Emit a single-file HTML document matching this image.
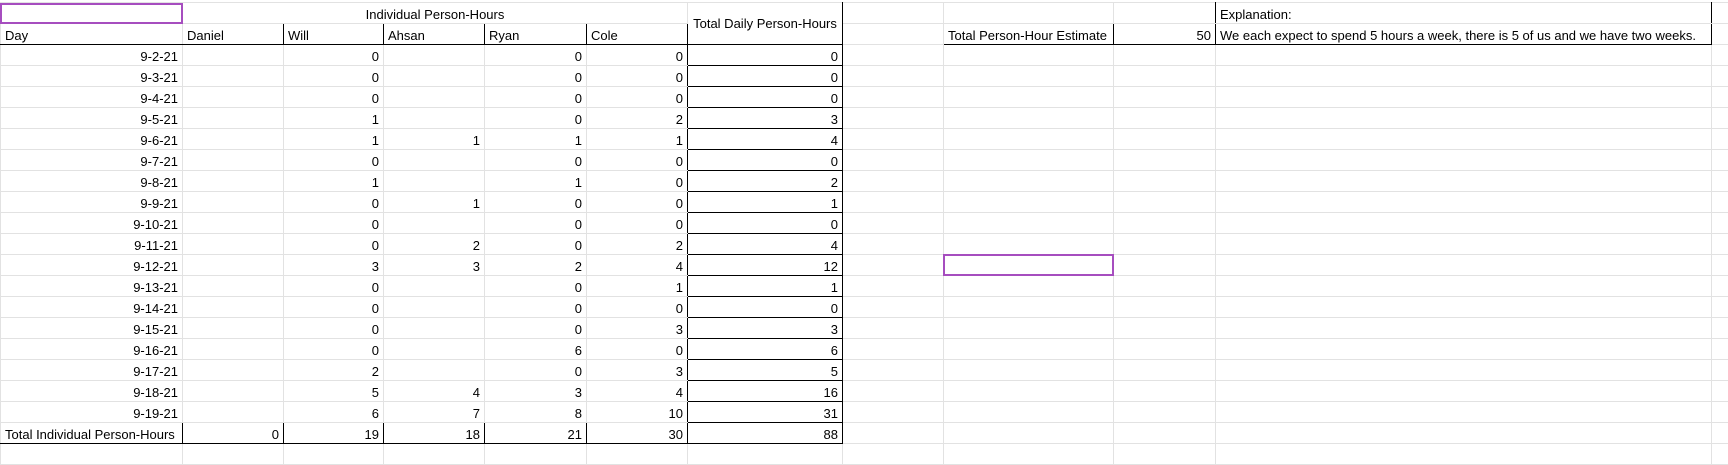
<!DOCTYPE html>
<html><head><meta charset="utf-8">
<style>
html,body{margin:0;padding:0;background:#fff;width:1728px;height:449px;overflow:hidden}
body{font-family:"Liberation Sans",Arial,sans-serif;font-size:13px;color:#000}
.top{position:absolute;left:0;top:0;width:1728px;height:2px;border-bottom:1px solid #c8c8c8}
table{position:absolute;left:0;top:2px;border-collapse:collapse;table-layout:fixed;width:1728px}
td{height:20px;padding:0 4px 0 4px;border:1px solid #e2e2e2;white-space:nowrap;overflow:visible;vertical-align:bottom;line-height:17px;box-sizing:border-box}
tr{height:21px}
.r{text-align:right}
.c{text-align:center}
.bl{border-left:1px solid #000}
.br{border-right:1px solid #000}
.bt{border-top:1px solid #000}
.bb{border-bottom:1px solid #000}
.pur{position:absolute;border:2px solid #a64dbf;box-sizing:border-box}
</style></head><body>
<div class="top"></div>
<table>
<colgroup><col style="width:182px"><col style="width:101px"><col style="width:100px"><col style="width:101px"><col style="width:102px"><col style="width:101px"><col style="width:155px"><col style="width:101px"><col style="width:170px"><col style="width:102px"><col style="width:496px"><col style="width:17px"></colgroup>
<tr><td></td><td colspan="5" class="c">Individual Person-Hours</td><td rowspan="2" class="c bl br bb" style="vertical-align:middle">Total Daily Person-Hours</td><td></td><td></td><td class="br"></td><td class="bl br">Explanation:</td><td></td></tr>
<tr><td class="bb">Day</td><td class="bt bb bl br">Daniel</td><td class="bt bb br">Will</td><td class="bt bb br">Ahsan</td><td class="bt bb br">Ryan</td><td class="bt bb br">Cole</td><td></td><td class="bt bb bl br">Total Person-Hour Estimate</td><td class="r bt bb br">50</td><td class="bl br bb">We each expect to spend 5 hours a week, there is 5 of us and we have two weeks.</td><td></td></tr>
<tr><td class="r">9-2-21</td><td class="bl"></td><td class="r">0</td><td></td><td class="r">0</td><td class="r br">0</td><td class="r br bb">0</td><td></td><td></td><td></td><td></td><td></td></tr>
<tr><td class="r">9-3-21</td><td class="bl"></td><td class="r">0</td><td></td><td class="r">0</td><td class="r br">0</td><td class="r br bb">0</td><td></td><td></td><td></td><td></td><td></td></tr>
<tr><td class="r">9-4-21</td><td class="bl"></td><td class="r">0</td><td></td><td class="r">0</td><td class="r br">0</td><td class="r br bb">0</td><td></td><td></td><td></td><td></td><td></td></tr>
<tr><td class="r">9-5-21</td><td class="bl"></td><td class="r">1</td><td></td><td class="r">0</td><td class="r br">2</td><td class="r br bb">3</td><td></td><td></td><td></td><td></td><td></td></tr>
<tr><td class="r">9-6-21</td><td class="bl"></td><td class="r">1</td><td class="r">1</td><td class="r">1</td><td class="r br">1</td><td class="r br bb">4</td><td></td><td></td><td></td><td></td><td></td></tr>
<tr><td class="r">9-7-21</td><td class="bl"></td><td class="r">0</td><td></td><td class="r">0</td><td class="r br">0</td><td class="r br bb">0</td><td></td><td></td><td></td><td></td><td></td></tr>
<tr><td class="r">9-8-21</td><td class="bl"></td><td class="r">1</td><td></td><td class="r">1</td><td class="r br">0</td><td class="r br bb">2</td><td></td><td></td><td></td><td></td><td></td></tr>
<tr><td class="r">9-9-21</td><td class="bl"></td><td class="r">0</td><td class="r">1</td><td class="r">0</td><td class="r br">0</td><td class="r br bb">1</td><td></td><td></td><td></td><td></td><td></td></tr>
<tr><td class="r">9-10-21</td><td class="bl"></td><td class="r">0</td><td></td><td class="r">0</td><td class="r br">0</td><td class="r br bb">0</td><td></td><td></td><td></td><td></td><td></td></tr>
<tr><td class="r">9-11-21</td><td class="bl"></td><td class="r">0</td><td class="r">2</td><td class="r">0</td><td class="r br">2</td><td class="r br bb">4</td><td></td><td></td><td></td><td></td><td></td></tr>
<tr><td class="r">9-12-21</td><td class="bl"></td><td class="r">3</td><td class="r">3</td><td class="r">2</td><td class="r br">4</td><td class="r br bb">12</td><td></td><td></td><td></td><td></td><td></td></tr>
<tr><td class="r">9-13-21</td><td class="bl"></td><td class="r">0</td><td></td><td class="r">0</td><td class="r br">1</td><td class="r br bb">1</td><td></td><td></td><td></td><td></td><td></td></tr>
<tr><td class="r">9-14-21</td><td class="bl"></td><td class="r">0</td><td></td><td class="r">0</td><td class="r br">0</td><td class="r br bb">0</td><td></td><td></td><td></td><td></td><td></td></tr>
<tr><td class="r">9-15-21</td><td class="bl"></td><td class="r">0</td><td></td><td class="r">0</td><td class="r br">3</td><td class="r br bb">3</td><td></td><td></td><td></td><td></td><td></td></tr>
<tr><td class="r">9-16-21</td><td class="bl"></td><td class="r">0</td><td></td><td class="r">6</td><td class="r br">0</td><td class="r br bb">6</td><td></td><td></td><td></td><td></td><td></td></tr>
<tr><td class="r">9-17-21</td><td class="bl"></td><td class="r">2</td><td></td><td class="r">0</td><td class="r br">3</td><td class="r br bb">5</td><td></td><td></td><td></td><td></td><td></td></tr>
<tr><td class="r">9-18-21</td><td class="bl"></td><td class="r">5</td><td class="r">4</td><td class="r">3</td><td class="r br">4</td><td class="r br bb">16</td><td></td><td></td><td></td><td></td><td></td></tr>
<tr><td class="r">9-19-21</td><td class="bl"></td><td class="r">6</td><td class="r">7</td><td class="r">8</td><td class="r br">10</td><td class="r br bb">31</td><td></td><td></td><td></td><td></td><td></td></tr>
<tr><td class="bt bb br">Total Individual Person-Hours</td><td class="r bt bb br">0</td><td class="r bt bb br">19</td><td class="r bt bb br">18</td><td class="r bt bb br">21</td><td class="r bt bb br">30</td><td class="r bt bb br">88</td><td></td><td></td><td></td><td></td><td></td></tr>
<tr><td></td><td></td><td></td><td></td><td></td><td></td><td></td><td></td><td></td><td></td><td></td><td></td></tr>
</table>
<div class="pur" style="left:0;top:3px;width:183px;height:21px"></div>
<div class="pur" style="left:943px;top:254px;width:171px;height:22px"></div>
</body></html>
